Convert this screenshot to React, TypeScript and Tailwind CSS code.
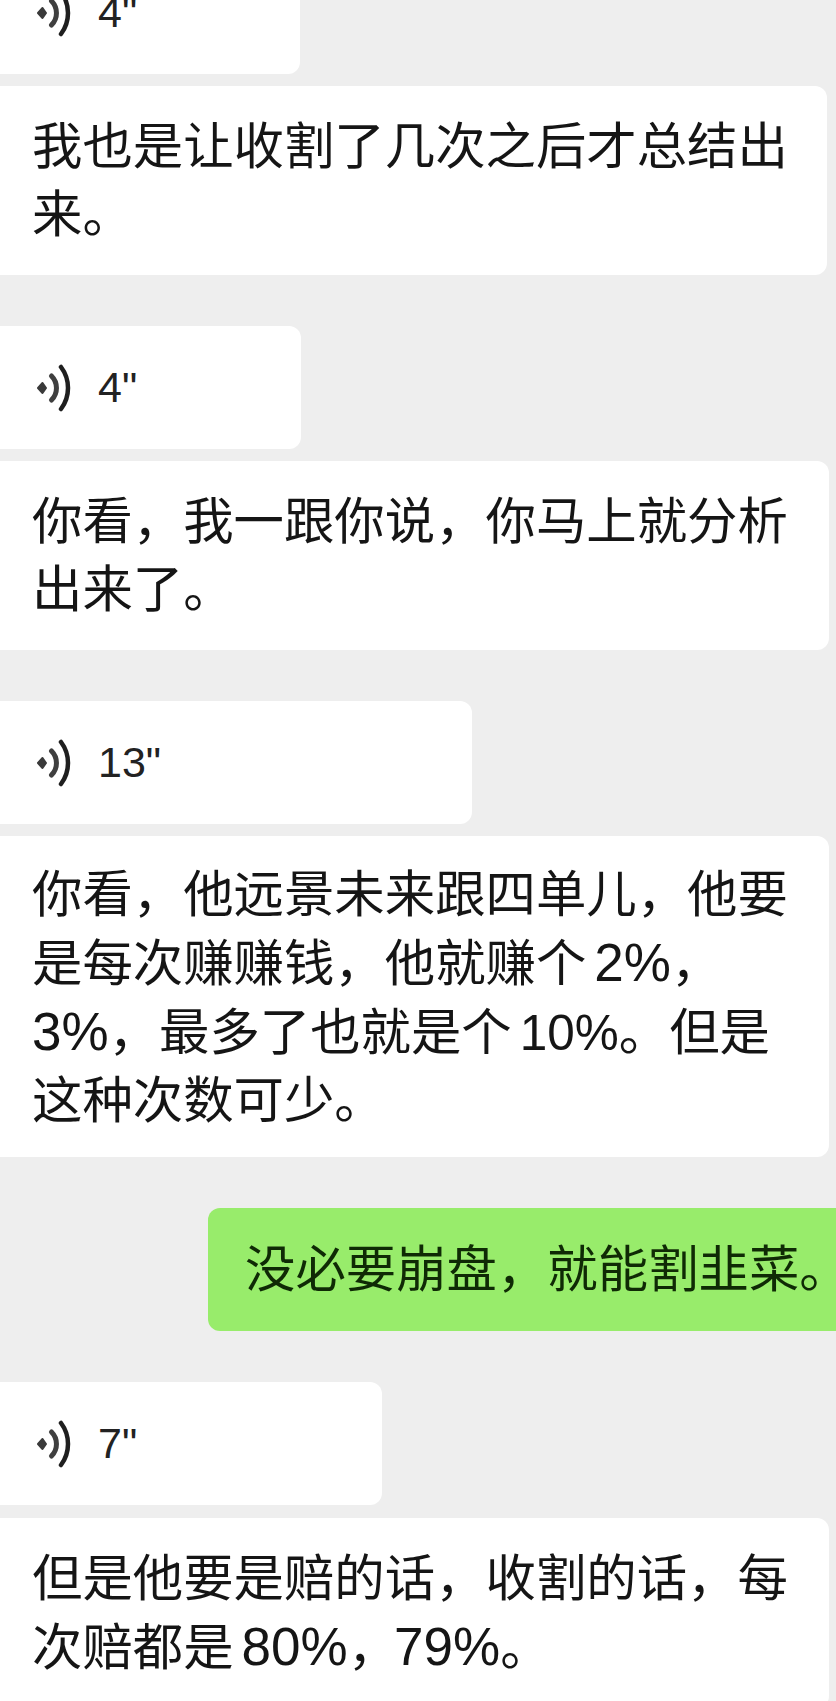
import type { ReactNode } from "react";

const fontStack = "font-['Liberation_Sans','Noto_Sans_CJK_SC',sans-serif]";

function VoiceIcon() {
	return (
		<svg width="36" height="48" viewBox="0 0 36 48" fill="none" className="shrink-0">
			<path d="M2 24 L6.5 19 L10 24 L6.5 29 Z" fill="#3a3a3a" stroke="#3a3a3a" strokeWidth="2" strokeLinejoin="round" />
			<path d="M15.5 12 A17 17 0 0 1 15.5 36" stroke="#3f3f3f" strokeWidth="5" strokeLinecap="round" />
			<path d="M25 3 A35 35 0 0 1 25 45" stroke="#1f1f1f" strokeWidth="4.5" strokeLinecap="round" />
		</svg>
	);
}

function Voice({ seconds, className }: { seconds: string; className: string }) {
	return (
		<div className={`flex h-[123px] items-center rounded-r-xl bg-white pl-9 ${className}`}>
			<VoiceIcon />
			<span className="ml-[26px] text-[43px] leading-none text-[#222]">{seconds}</span>
		</div>
	);
}

function TextBubble({ children, className }: { children: ReactNode; className?: string }) {
	return (
		<div className={`rounded-r-xl bg-white pl-8 text-[50.4px] leading-[68px] text-[#151515] ${className ?? ""}`}>
			{children}
		</div>
	);
}

export default function App() {
	return (
		<div className={`flex h-[1701px] w-[836px] flex-col overflow-hidden bg-[#eeeeee] ${fontStack}`}>
			<div className="-mt-[49px] flex flex-col">
				<Voice seconds={'4"'} className="w-[300px]" />
				<TextBubble className="mt-3 w-[827px] pt-[27px] pb-[26px]">
					我也是让收割了几次之后才总结出
					<br />
					来。
				</TextBubble>

				<Voice seconds={'4"'} className="mt-[51px] w-[301px]" />
				<TextBubble className="mt-3 w-[829px] pt-[27px] pb-[26px]">
					你看，我一跟你说，你马上就分析
					<br />
					出来了。
				</TextBubble>

				<Voice seconds={'13"'} className="mt-[51px] w-[472px]" />
				<TextBubble className="mt-3 w-[829px] pt-[25px] pb-[22px]">
					你看，他远景未来跟四单儿，他要
					<br />
					是每次赚赚钱，他就赚个<span className="ml-2 text-[53px]">2%</span>，
					<br />
					<span className="text-[53px]">3%</span>，最多了也就是个<span className="ml-2 text-[49.5px]">10%</span>。但是
					<br />
					这种次数可少。
				</TextBubble>

				<div className="mt-[51px] ml-[208px] flex h-[123px] w-[640px] items-center rounded-l-xl bg-[#98ec6b] pl-[37px] text-[50.4px] whitespace-nowrap text-[#0f2a05]">
					没必要崩盘，就能割韭菜。
				</div>

				<Voice seconds={'7"'} className="mt-[51px] w-[382px]" />
				<TextBubble className="mt-[13px] w-[829px] pt-[27px] pb-[26px]">
					但是他要是赔的话，收割的话，每
					<br />
					次赔都是<span className="ml-2 text-[53px]">80%</span>，<span className="-ml-1 text-[53px]">79%</span>。
				</TextBubble>
			</div>
		</div>
	);
}
